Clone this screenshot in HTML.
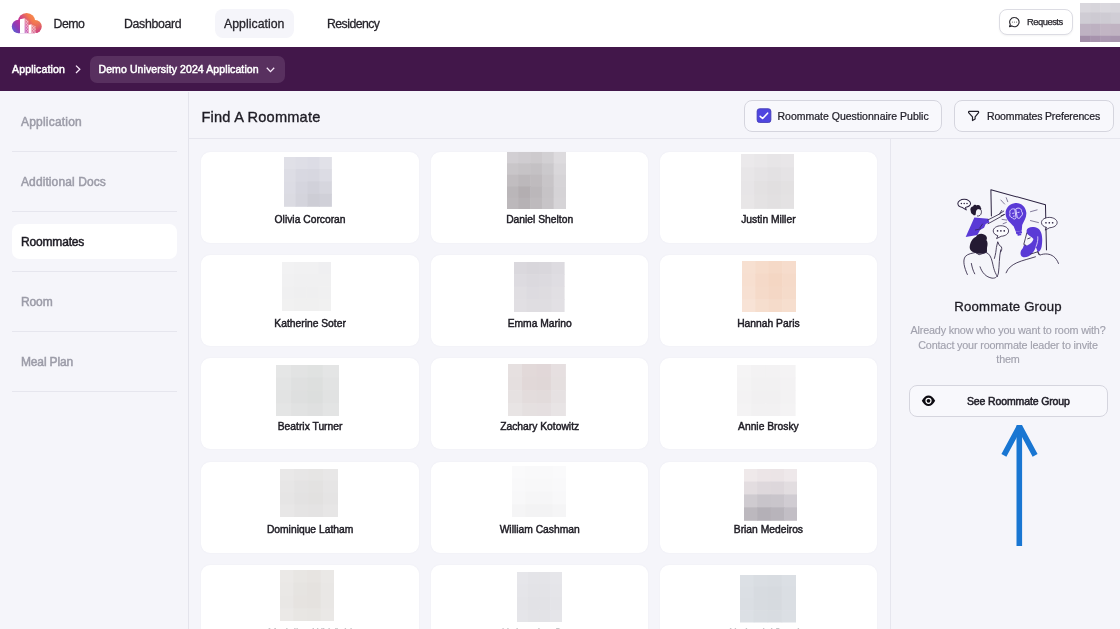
<!DOCTYPE html>
<html><head><meta charset="utf-8"><title>Find A Roommate</title>
<style>
*{box-sizing:border-box;margin:0;padding:0}
html,body{width:1120px;height:629px;overflow:hidden;background:#f5f5fa;font-family:"Liberation Sans",sans-serif;color:#1e1c24}
.abs{position:absolute}
.t{position:absolute;white-space:nowrap}
#top{position:absolute;left:0;top:0;width:1120px;height:47px;background:#fff}
.nav{-webkit-text-stroke:.28px;font-size:12.3px;line-height:16px;top:16px;color:#26242b}
#appl{position:absolute;left:215px;top:9px;width:79px;height:29px;border-radius:8px;background:#f5f5fa}
#req{position:absolute;left:998.5px;top:9px;width:74px;height:26px;border:1px solid #dcdce3;border-radius:8px;background:#fff;box-shadow:0 1px 2px rgba(0,0,0,.05)}
#bar{position:absolute;left:0;top:47px;width:1120px;height:44.2px;background:#42174a}
.bt{color:#fff;-webkit-text-stroke:.5px #fff;font-size:10.5px;line-height:14px;top:62px;letter-spacing:.1px}
#pill{position:absolute;left:89.5px;top:56.2px;width:195px;height:26.7px;border-radius:7px;background:#58305f}
#sideline{position:absolute;left:188px;top:91.5px;width:1px;height:538px;background:#e4e4ec}
.si{left:21px;font-size:12px;color:#9c9ca8;-webkit-text-stroke:.5px;line-height:16px;letter-spacing:.1px}
.sl{position:absolute;left:11.5px;width:165.5px;height:1px;background:#e6e6ee}
#sel{position:absolute;left:11.5px;top:224px;width:165.5px;height:35px;border-radius:8px;background:#fff}
#hline{position:absolute;left:189px;top:138px;width:931px;height:1px;background:#e6e6ee}
#h1{-webkit-text-stroke:.35px;left:201.5px;top:108px;line-height:18px;font-size:14.6px;color:#1e1c24;letter-spacing:.2px}
.btn{position:absolute;border:1px solid #d5d5de;border-radius:8px;background:#f8f8fc}
.btx{-webkit-text-stroke:.22px;font-size:10.5px;line-height:14px;color:#22202a}
#rline{position:absolute;left:889.5px;top:139px;width:1px;height:490px;background:#e6e6ee}
.card{position:absolute;width:217.6px;height:91px;border-radius:9px;background:#fff;box-shadow:0 0 2px rgba(80,80,120,.06)}
.nm{position:absolute;width:217.6px;text-align:center;font-size:10.3px;line-height:14px;color:#1e1c24;-webkit-text-stroke:.45px;letter-spacing:0;white-space:nowrap}
.para{-webkit-text-stroke:.15px;position:absolute;left:900px;width:216px;text-align:center;color:#a1a1ad;font-size:10.8px;line-height:14.8px;letter-spacing:-.17px;white-space:nowrap}
#wrap{position:absolute;left:0;top:0;width:1120px;height:629px;will-change:transform}
</style></head><body>
<div id="wrap">
<div id="top">
 <div id="appl"></div>
<svg class="abs" style="left:10px;top:10px" width="34" height="26" viewBox="10 10 34 26">
<defs><linearGradient id="lg" x1="13" y1="33" x2="38" y2="14" gradientUnits="userSpaceOnUse"><stop offset="0" stop-color="#4f6bd8"/><stop offset=".2" stop-color="#8a3db8"/><stop offset=".42" stop-color="#c2339a"/><stop offset=".72" stop-color="#f4794e"/><stop offset="1" stop-color="#f79a4a"/></linearGradient>
<linearGradient id="lg2" x1="31" y1="21" x2="40" y2="33" gradientUnits="userSpaceOnUse"><stop offset="0" stop-color="#f4794e" stop-opacity="0"/><stop offset="1" stop-color="#c2338e"/></linearGradient>
<pattern id="dots" width="1.5" height="1.5" patternUnits="userSpaceOnUse"><rect width=".7" height=".7" fill="#fff" fill-opacity=".9"/><rect x=".75" y=".75" width=".7" height=".7" fill="#fff" fill-opacity=".9"/></pattern></defs>
<g fill="url(#lg)"><circle cx="18.5" cy="26.5" r="6.7"/><circle cx="26.6" cy="21.7" r="8.8"/><circle cx="35" cy="26.5" r="6.6"/><rect x="18.5" y="24" width="16.5" height="9.2"/></g>
<g fill="url(#lg2)"><circle cx="35" cy="26.5" r="6.6"/><rect x="28" y="26" width="7" height="7.2"/></g>
<path d="M20 33.3V19.2l4.7-1v15.1z" fill="#fff"/>
<path d="M24.7 18.2l3.8 2.6v12.5h-3.8z" fill="url(#dots)"/>
<path d="M28.6 33.3V25l2.9-.8v9.1z" fill="#fff"/>
<path d="M31.5 24.2l4.2 2.4v6.7h-4.2z" fill="url(#dots)"/>
</svg>

 <div class="t nav" style="left:53.5px;letter-spacing:-.5px">Demo</div>
 <div class="t nav" style="left:124px;letter-spacing:-.32px">Dashboard</div>
 <div class="t nav" style="left:224px;letter-spacing:.03px">Application</div>
 <div class="t nav" style="left:327px;letter-spacing:-.55px">Residency</div>
 <div id="req"></div>
<svg class="abs" style="left:1006px;top:14px" width="16" height="16" viewBox="1006 14 16 16"><path d="M1014.5 17.5a4.6 4.6 0 1 1-2.6 8.4l-2.4.7.8-2.2a4.6 4.6 0 0 1 4.2-6.9z" fill="none" stroke="#26242b" stroke-width="1.1" stroke-linejoin="round"/><g fill="#777"><circle cx="1012.4" cy="22.1" r=".6"/><circle cx="1014.5" cy="22.1" r=".6"/><circle cx="1016.6" cy="22.1" r=".6"/></g></svg>

 <div class="t" style="left:1027px;top:16px;-webkit-text-stroke:.25px;font-size:9.4px;line-height:12px;color:#26242b;letter-spacing:-.5px">Requests</div>
<svg class="abs" style="left:1079.5px;top:2.5px;filter:blur(.5px)" width="41" height="39.5" viewBox="0 0 41 39.5"><rect x="-0.2" y="0" width="10.7" height="10.0" fill="#d9d7dd"/><rect x="10.1" y="0" width="10.7" height="10.0" fill="#d7d5db"/><rect x="20.3" y="0" width="10.7" height="10.0" fill="#dad8de"/><rect x="30.6" y="0" width="10.7" height="10.0" fill="#d8d6dc"/><rect x="-0.2" y="9.5" width="10.7" height="11.8" fill="#cfccd4"/><rect x="10.1" y="9.5" width="10.7" height="11.8" fill="#cdcad2"/><rect x="20.3" y="9.5" width="10.7" height="11.8" fill="#cecbd3"/><rect x="30.6" y="9.5" width="10.7" height="11.8" fill="#d0cdd5"/><rect x="-0.2" y="20.8" width="10.7" height="12.5" fill="#beb2c2"/><rect x="10.1" y="20.8" width="10.7" height="12.5" fill="#bdb1c1"/><rect x="20.3" y="20.8" width="10.7" height="12.5" fill="#c2b5c4"/><rect x="30.6" y="20.8" width="10.7" height="12.5" fill="#c0b3c2"/><rect x="-0.2" y="32.8" width="10.7" height="7.0" fill="#a28ea8"/><rect x="10.1" y="32.8" width="10.7" height="7.0" fill="#a793ad"/><rect x="20.3" y="32.8" width="10.7" height="7.0" fill="#ab98b1"/><rect x="30.6" y="32.8" width="10.7" height="7.0" fill="#a895ae"/></svg>

</div>
<div id="bar"></div>
<div id="pill"></div>
<div class="t bt" style="left:12px;letter-spacing:.15px">Application</div>
<div class="t bt" style="left:98.5px">Demo University 2024 Application</div>
<svg class="abs" style="left:70px;top:60px" width="210" height="20" viewBox="70 60 210 20"><g fill="none" stroke="#f8e8fb" stroke-width="1.3"><path d="M76 65.6 79.8 69.3 76 73"/><path d="M266.8 67.8 270.5 71.6 274.2 67.8"/></g></svg>

<div id="sideline"></div>
<div id="sel"></div>
<div class="t si" style="top:114px;letter-spacing:.2px">Application</div><div class="sl" style="top:151px"></div>
<div class="t si" style="top:174px">Additional Docs</div><div class="sl" style="top:211px"></div>
<div class="t si" style="top:234px;color:#1e1c24;letter-spacing:-.17px">Roommates</div><div class="sl" style="top:271px"></div>
<div class="t si" style="top:294px;letter-spacing:-.12px">Room</div><div class="sl" style="top:331px"></div>
<div class="t si" style="top:354px;letter-spacing:-.15px">Meal Plan</div><div class="sl" style="top:391px"></div>
<div id="hline"></div>
<div class="t" id="h1">Find A Roommate</div>
<div class="btn" style="left:743.5px;top:99.5px;width:198px;height:32.5px"></div>
<div class="btn" style="left:954px;top:99.5px;width:160px;height:32.5px"></div>
<svg class="abs" style="left:754px;top:105px" width="230" height="22" viewBox="754 105 230 22"><rect x="757.1" y="108.7" width="13.8" height="13.8" rx="2.6" fill="#4f46e0" stroke="#4039b4" stroke-width=".8"/><path d="M760.2 116.4 762.6 118.5 767.6 113.2" fill="none" stroke="#fff" stroke-width="1.6" stroke-linecap="round" stroke-linejoin="round"/>
<path d="M969.2 111.4h8.8q.6 0 .6.6v.7l-3.5 4.2v2l-2.6 1.6v-3.6l-3.9-4.2v-.7q0-.6.6-.6z" fill="none" stroke="#22202a" stroke-width="1.2" stroke-linejoin="round"/></svg>

<div class="t btx" style="left:777.5px;top:108.5px">Roommate Questionnaire Public</div>
<div class="t btx" style="left:987px;top:108.5px;letter-spacing:-.15px">Roommates Preferences</div>
<div class="card" style="left:201.3px;top:151.5px"></div>
<svg class="abs" style="left:284.4px;top:157.0px;filter:blur(.6px)" width="47.6" height="49.5" viewBox="0 0 47.60 49.50"><rect x="-0.30" y="-0.30" width="12.50" height="12.97" fill="#e0e0e7"/><rect x="11.60" y="-0.30" width="12.50" height="12.97" fill="#dedee6"/><rect x="23.50" y="-0.30" width="12.50" height="12.97" fill="#dcdce5"/><rect x="35.40" y="-0.30" width="12.50" height="12.97" fill="#e1e1e8"/><rect x="-0.30" y="12.07" width="12.50" height="12.97" fill="#dddde5"/><rect x="11.60" y="12.07" width="12.50" height="12.97" fill="#d8d8e1"/><rect x="23.50" y="12.07" width="12.50" height="12.97" fill="#d7d7e0"/><rect x="35.40" y="12.07" width="12.50" height="12.97" fill="#dcdce4"/><rect x="-0.30" y="24.45" width="12.50" height="12.97" fill="#dcdce4"/><rect x="11.60" y="24.45" width="12.50" height="12.97" fill="#d5d5de"/><rect x="23.50" y="24.45" width="12.50" height="12.97" fill="#d1d1da"/><rect x="35.40" y="24.45" width="12.50" height="12.97" fill="#d6d6de"/><rect x="-0.30" y="36.83" width="12.50" height="12.97" fill="#dbdbe2"/><rect x="11.60" y="36.83" width="12.50" height="12.97" fill="#d4d4dc"/><rect x="23.50" y="36.83" width="12.50" height="12.97" fill="#cdcdd5"/><rect x="35.40" y="36.83" width="12.50" height="12.97" fill="#d0d0d8"/></svg>
<div class="nm" style="left:201.3px;top:213.1px">Olivia Corcoran</div>
<div class="card" style="left:430.9px;top:151.5px"></div>
<svg class="abs" style="left:507.3px;top:151.7px;filter:blur(.6px)" width="58.7" height="57.5" viewBox="0 0 58.70 57.50"><rect x="-0.30" y="-0.30" width="12.34" height="12.10" fill="#d2cfd3"/><rect x="11.44" y="-0.30" width="12.34" height="12.10" fill="#cfccd0"/><rect x="23.18" y="-0.30" width="12.34" height="12.10" fill="#cdcacd"/><rect x="34.92" y="-0.30" width="12.34" height="12.10" fill="#d2d0d3"/><rect x="46.66" y="-0.30" width="12.34" height="12.10" fill="#dddbde"/><rect x="-0.30" y="11.20" width="12.34" height="12.10" fill="#c9c6c9"/><rect x="11.44" y="11.20" width="12.34" height="12.10" fill="#c6c3c6"/><rect x="23.18" y="11.20" width="12.34" height="12.10" fill="#c4c1c4"/><rect x="34.92" y="11.20" width="12.34" height="12.10" fill="#cbc9cc"/><rect x="46.66" y="11.20" width="12.34" height="12.10" fill="#d9d7da"/><rect x="-0.30" y="22.70" width="12.34" height="12.10" fill="#c1bdc0"/><rect x="11.44" y="22.70" width="12.34" height="12.10" fill="#bcb8bb"/><rect x="23.18" y="22.70" width="12.34" height="12.10" fill="#bfbbbe"/><rect x="34.92" y="22.70" width="12.34" height="12.10" fill="#c8c5c8"/><rect x="46.66" y="22.70" width="12.34" height="12.10" fill="#d6d4d7"/><rect x="-0.30" y="34.20" width="12.34" height="12.10" fill="#bab6b9"/><rect x="11.44" y="34.20" width="12.34" height="12.10" fill="#b3aeb1"/><rect x="23.18" y="34.20" width="12.34" height="12.10" fill="#bbb7ba"/><rect x="34.92" y="34.20" width="12.34" height="12.10" fill="#c6c3c6"/><rect x="46.66" y="34.20" width="12.34" height="12.10" fill="#d5d3d6"/><rect x="-0.30" y="45.70" width="12.34" height="12.10" fill="#bcb8bb"/><rect x="11.44" y="45.70" width="12.34" height="12.10" fill="#b6b2b5"/><rect x="23.18" y="45.70" width="12.34" height="12.10" fill="#bebabd"/><rect x="34.92" y="45.70" width="12.34" height="12.10" fill="#c7c4c7"/><rect x="46.66" y="45.70" width="12.34" height="12.10" fill="#d6d4d7"/></svg>
<div class="nm" style="left:430.9px;top:213.1px">Daniel Shelton</div>
<div class="card" style="left:659.6px;top:151.5px"></div>
<svg class="abs" style="left:740.6px;top:154.2px;filter:blur(.6px)" width="53.4" height="54.6" viewBox="0 0 53.40 54.60"><rect x="-0.30" y="-0.30" width="13.95" height="14.25" fill="#ebe9eb"/><rect x="13.05" y="-0.30" width="13.95" height="14.25" fill="#e9e7e9"/><rect x="26.40" y="-0.30" width="13.95" height="14.25" fill="#e7e5e7"/><rect x="39.75" y="-0.30" width="13.95" height="14.25" fill="#e8e6e8"/><rect x="-0.30" y="13.35" width="13.95" height="14.25" fill="#e8e6e8"/><rect x="13.05" y="13.35" width="13.95" height="14.25" fill="#e5e3e5"/><rect x="26.40" y="13.35" width="13.95" height="14.25" fill="#e3e1e3"/><rect x="39.75" y="13.35" width="13.95" height="14.25" fill="#e5e3e5"/><rect x="-0.30" y="27.00" width="13.95" height="14.25" fill="#e7e5e7"/><rect x="13.05" y="27.00" width="13.95" height="14.25" fill="#e3e1e2"/><rect x="26.40" y="27.00" width="13.95" height="14.25" fill="#e1dfe0"/><rect x="39.75" y="27.00" width="13.95" height="14.25" fill="#e3e1e2"/><rect x="-0.30" y="40.65" width="13.95" height="14.25" fill="#e8e6e7"/><rect x="13.05" y="40.65" width="13.95" height="14.25" fill="#e4e2e3"/><rect x="26.40" y="40.65" width="13.95" height="14.25" fill="#e2e0e1"/><rect x="39.75" y="40.65" width="13.95" height="14.25" fill="#e4e2e3"/></svg>
<div class="nm" style="left:659.6px;top:213.1px">Justin Miller</div>
<div class="card" style="left:201.3px;top:255px"></div>
<svg class="abs" style="left:282.3px;top:262.0px;filter:blur(.6px)" width="49.1" height="49.0" viewBox="0 0 49.10 49.00"><rect x="-0.30" y="-0.30" width="12.87" height="12.85" fill="#f2f2f3"/><rect x="11.97" y="-0.30" width="12.87" height="12.85" fill="#f1f1f2"/><rect x="24.25" y="-0.30" width="12.87" height="12.85" fill="#f1f1f2"/><rect x="36.52" y="-0.30" width="12.87" height="12.85" fill="#efeff1"/><rect x="-0.30" y="11.95" width="12.87" height="12.85" fill="#f1f1f2"/><rect x="11.97" y="11.95" width="12.87" height="12.85" fill="#f0f0f1"/><rect x="24.25" y="11.95" width="12.87" height="12.85" fill="#f0f0f1"/><rect x="36.52" y="11.95" width="12.87" height="12.85" fill="#f0f0f1"/><rect x="-0.30" y="24.20" width="12.87" height="12.85" fill="#f0f0f1"/><rect x="11.97" y="24.20" width="12.87" height="12.85" fill="#efeff0"/><rect x="24.25" y="24.20" width="12.87" height="12.85" fill="#efeff0"/><rect x="36.52" y="24.20" width="12.87" height="12.85" fill="#f0f0f1"/><rect x="-0.30" y="36.45" width="12.87" height="12.85" fill="#f1f1f1"/><rect x="11.97" y="36.45" width="12.87" height="12.85" fill="#f0f0f0"/><rect x="24.25" y="36.45" width="12.87" height="12.85" fill="#f0f0f0"/><rect x="36.52" y="36.45" width="12.87" height="12.85" fill="#f1f1f1"/></svg>
<div class="nm" style="left:201.3px;top:316.6px">Katherine Soter</div>
<div class="card" style="left:430.9px;top:255px"></div>
<svg class="abs" style="left:514.3px;top:262.0px;filter:blur(.6px)" width="50.3" height="49.7" viewBox="0 0 50.30 49.70"><rect x="-0.30" y="-0.30" width="13.18" height="13.02" fill="#dad8dd"/><rect x="12.28" y="-0.30" width="13.18" height="13.02" fill="#d8d6db"/><rect x="24.85" y="-0.30" width="13.18" height="13.02" fill="#d9d7dc"/><rect x="37.43" y="-0.30" width="13.18" height="13.02" fill="#dddbe0"/><rect x="-0.30" y="12.12" width="13.18" height="13.02" fill="#dddbe0"/><rect x="12.28" y="12.12" width="13.18" height="13.02" fill="#dbd9de"/><rect x="24.85" y="12.12" width="13.18" height="13.02" fill="#dcdadf"/><rect x="37.43" y="12.12" width="13.18" height="13.02" fill="#dfdde2"/><rect x="-0.30" y="24.55" width="13.18" height="13.02" fill="#e0dee2"/><rect x="12.28" y="24.55" width="13.18" height="13.02" fill="#dddbe0"/><rect x="24.85" y="24.55" width="13.18" height="13.02" fill="#dedce0"/><rect x="37.43" y="24.55" width="13.18" height="13.02" fill="#e1dfe3"/><rect x="-0.30" y="36.97" width="13.18" height="13.02" fill="#e1dfe3"/><rect x="12.28" y="36.97" width="13.18" height="13.02" fill="#dfdde1"/><rect x="24.85" y="36.97" width="13.18" height="13.02" fill="#dfdde1"/><rect x="37.43" y="36.97" width="13.18" height="13.02" fill="#e2e0e4"/></svg>
<div class="nm" style="left:430.9px;top:316.6px">Emma Marino</div>
<div class="card" style="left:659.6px;top:255px"></div>
<svg class="abs" style="left:741.7px;top:260.5px;filter:blur(.6px)" width="54.0" height="51.5" viewBox="0 0 54.00 51.50"><rect x="-0.30" y="-0.30" width="14.10" height="13.47" fill="#f7e0d1"/><rect x="13.20" y="-0.30" width="14.10" height="13.47" fill="#f6dccb"/><rect x="26.70" y="-0.30" width="14.10" height="13.47" fill="#f5d9c7"/><rect x="40.20" y="-0.30" width="14.10" height="13.47" fill="#f6dccc"/><rect x="-0.30" y="12.57" width="14.10" height="13.47" fill="#f7dfd0"/><rect x="13.20" y="12.57" width="14.10" height="13.47" fill="#f5d9c8"/><rect x="26.70" y="12.57" width="14.10" height="13.47" fill="#f4d6c3"/><rect x="40.20" y="12.57" width="14.10" height="13.47" fill="#f5dac9"/><rect x="-0.30" y="25.45" width="14.10" height="13.47" fill="#f7e0d2"/><rect x="13.20" y="25.45" width="14.10" height="13.47" fill="#f5dac9"/><rect x="26.70" y="25.45" width="14.10" height="13.47" fill="#f4d7c5"/><rect x="40.20" y="25.45" width="14.10" height="13.47" fill="#f5dbca"/><rect x="-0.30" y="38.33" width="14.10" height="13.47" fill="#f8e3d6"/><rect x="13.20" y="38.33" width="14.10" height="13.47" fill="#f6dece"/><rect x="26.70" y="38.33" width="14.10" height="13.47" fill="#f5dbca"/><rect x="40.20" y="38.33" width="14.10" height="13.47" fill="#f6dece"/></svg>
<div class="nm" style="left:659.6px;top:316.6px">Hannah Paris</div>
<div class="card" style="left:201.3px;top:358.2px"></div>
<svg class="abs" style="left:276.3px;top:364.8px;filter:blur(.6px)" width="62.7" height="51.5" viewBox="0 0 62.70 51.50"><rect x="-0.30" y="-0.30" width="16.27" height="13.47" fill="#e5e6e6"/><rect x="15.37" y="-0.30" width="16.27" height="13.47" fill="#e2e3e3"/><rect x="31.05" y="-0.30" width="16.27" height="13.47" fill="#e0e2e1"/><rect x="46.72" y="-0.30" width="16.27" height="13.47" fill="#e4e5e5"/><rect x="-0.30" y="12.57" width="16.27" height="13.47" fill="#e3e4e4"/><rect x="15.37" y="12.57" width="16.27" height="13.47" fill="#dfe0e0"/><rect x="31.05" y="12.57" width="16.27" height="13.47" fill="#dddfde"/><rect x="46.72" y="12.57" width="16.27" height="13.47" fill="#e2e3e3"/><rect x="-0.30" y="25.45" width="16.27" height="13.47" fill="#e2e3e3"/><rect x="15.37" y="25.45" width="16.27" height="13.47" fill="#dedfdf"/><rect x="31.05" y="25.45" width="16.27" height="13.47" fill="#dcdedd"/><rect x="46.72" y="25.45" width="16.27" height="13.47" fill="#e1e2e2"/><rect x="-0.30" y="38.33" width="16.27" height="13.47" fill="#e4e5e5"/><rect x="15.37" y="38.33" width="16.27" height="13.47" fill="#e1e2e2"/><rect x="31.05" y="38.33" width="16.27" height="13.47" fill="#dfe0e0"/><rect x="46.72" y="38.33" width="16.27" height="13.47" fill="#e3e4e4"/></svg>
<div class="nm" style="left:201.3px;top:419.8px">Beatrix Turner</div>
<div class="card" style="left:430.9px;top:358.2px"></div>
<svg class="abs" style="left:508.4px;top:363.6px;filter:blur(.6px)" width="57.6" height="52.7" viewBox="0 0 57.60 52.70"><rect x="-0.30" y="-0.30" width="15.00" height="13.77" fill="#e6e0e0"/><rect x="14.10" y="-0.30" width="15.00" height="13.77" fill="#e2d9d9"/><rect x="28.50" y="-0.30" width="15.00" height="13.77" fill="#e1d7d8"/><rect x="42.90" y="-0.30" width="15.00" height="13.77" fill="#e6dfe0"/><rect x="-0.30" y="12.87" width="15.00" height="13.77" fill="#e5dfdf"/><rect x="14.10" y="12.87" width="15.00" height="13.77" fill="#e1d8d8"/><rect x="28.50" y="12.87" width="15.00" height="13.77" fill="#e0d7d7"/><rect x="42.90" y="12.87" width="15.00" height="13.77" fill="#e5dfdf"/><rect x="-0.30" y="26.05" width="15.00" height="13.77" fill="#e6e1e1"/><rect x="14.10" y="26.05" width="15.00" height="13.77" fill="#e3dcdc"/><rect x="28.50" y="26.05" width="15.00" height="13.77" fill="#e2dbdb"/><rect x="42.90" y="26.05" width="15.00" height="13.77" fill="#e6e1e2"/><rect x="-0.30" y="39.22" width="15.00" height="13.77" fill="#e8e4e4"/><rect x="14.10" y="39.22" width="15.00" height="13.77" fill="#e5e0e0"/><rect x="28.50" y="39.22" width="15.00" height="13.77" fill="#e5dfe0"/><rect x="42.90" y="39.22" width="15.00" height="13.77" fill="#e8e4e5"/></svg>
<div class="nm" style="left:430.9px;top:419.8px">Zachary Kotowitz</div>
<div class="card" style="left:659.6px;top:358.2px"></div>
<svg class="abs" style="left:737.4px;top:364.8px;filter:blur(.6px)" width="58.3" height="51.5" viewBox="0 0 58.30 51.50"><rect x="-0.30" y="-0.30" width="15.18" height="13.47" fill="#f5f4f5"/><rect x="14.28" y="-0.30" width="15.18" height="13.47" fill="#f3f2f3"/><rect x="28.85" y="-0.30" width="15.18" height="13.47" fill="#f3f2f3"/><rect x="43.43" y="-0.30" width="15.18" height="13.47" fill="#f4f3f4"/><rect x="-0.30" y="12.57" width="15.18" height="13.47" fill="#f4f3f4"/><rect x="14.28" y="12.57" width="15.18" height="13.47" fill="#f2f1f2"/><rect x="28.85" y="12.57" width="15.18" height="13.47" fill="#f2f1f2"/><rect x="43.43" y="12.57" width="15.18" height="13.47" fill="#f3f2f3"/><rect x="-0.30" y="25.45" width="15.18" height="13.47" fill="#f3f2f3"/><rect x="14.28" y="25.45" width="15.18" height="13.47" fill="#f1f0f1"/><rect x="28.85" y="25.45" width="15.18" height="13.47" fill="#f1f0f1"/><rect x="43.43" y="25.45" width="15.18" height="13.47" fill="#f3f2f3"/><rect x="-0.30" y="38.33" width="15.18" height="13.47" fill="#f4f3f4"/><rect x="14.28" y="38.33" width="15.18" height="13.47" fill="#f2f1f2"/><rect x="28.85" y="38.33" width="15.18" height="13.47" fill="#f2f1f2"/><rect x="43.43" y="38.33" width="15.18" height="13.47" fill="#f4f3f4"/></svg>
<div class="nm" style="left:659.6px;top:419.8px">Annie Brosky</div>
<div class="card" style="left:201.3px;top:461.5px"></div>
<svg class="abs" style="left:280.0px;top:469.3px;filter:blur(.6px)" width="57.7" height="47.7" viewBox="0 0 57.70 47.70"><rect x="-0.30" y="-0.30" width="15.02" height="12.52" fill="#e9e8e8"/><rect x="14.12" y="-0.30" width="15.02" height="12.52" fill="#e7e6e6"/><rect x="28.55" y="-0.30" width="15.02" height="12.52" fill="#e6e5e4"/><rect x="42.97" y="-0.30" width="15.02" height="12.52" fill="#e8e7e7"/><rect x="-0.30" y="11.62" width="15.02" height="12.52" fill="#e7e6e6"/><rect x="14.12" y="11.62" width="15.02" height="12.52" fill="#e4e3e3"/><rect x="28.55" y="11.62" width="15.02" height="12.52" fill="#e3e2e1"/><rect x="42.97" y="11.62" width="15.02" height="12.52" fill="#e6e5e5"/><rect x="-0.30" y="23.55" width="15.02" height="12.52" fill="#e6e5e5"/><rect x="14.12" y="23.55" width="15.02" height="12.52" fill="#e3e2e2"/><rect x="28.55" y="23.55" width="15.02" height="12.52" fill="#e2e1e0"/><rect x="42.97" y="23.55" width="15.02" height="12.52" fill="#e5e4e4"/><rect x="-0.30" y="35.47" width="15.02" height="12.52" fill="#e8e7e7"/><rect x="14.12" y="35.47" width="15.02" height="12.52" fill="#e5e4e4"/><rect x="28.55" y="35.47" width="15.02" height="12.52" fill="#e4e3e3"/><rect x="42.97" y="35.47" width="15.02" height="12.52" fill="#e7e6e6"/></svg>
<div class="nm" style="left:201.3px;top:523.1px">Dominique Latham</div>
<div class="card" style="left:430.9px;top:461.5px"></div>
<svg class="abs" style="left:511.5px;top:465.5px;filter:blur(.6px)" width="54.5" height="51.5" viewBox="0 0 54.50 51.50"><rect x="-0.30" y="-0.30" width="14.22" height="13.47" fill="#fafafb"/><rect x="13.32" y="-0.30" width="14.22" height="13.47" fill="#f9f9fa"/><rect x="26.95" y="-0.30" width="14.22" height="13.47" fill="#f9f9fa"/><rect x="40.58" y="-0.30" width="14.22" height="13.47" fill="#fafafb"/><rect x="-0.30" y="12.57" width="14.22" height="13.47" fill="#f9f9fa"/><rect x="13.32" y="12.57" width="14.22" height="13.47" fill="#f8f8f9"/><rect x="26.95" y="12.57" width="14.22" height="13.47" fill="#f8f8f9"/><rect x="40.58" y="12.57" width="14.22" height="13.47" fill="#f9f9fa"/><rect x="-0.30" y="25.45" width="14.22" height="13.47" fill="#f8f8f9"/><rect x="13.32" y="25.45" width="14.22" height="13.47" fill="#f6f6f7"/><rect x="26.95" y="25.45" width="14.22" height="13.47" fill="#f6f6f7"/><rect x="40.58" y="25.45" width="14.22" height="13.47" fill="#f8f8f9"/><rect x="-0.30" y="38.33" width="14.22" height="13.47" fill="#f5f5f6"/><rect x="13.32" y="38.33" width="14.22" height="13.47" fill="#f3f3f4"/><rect x="26.95" y="38.33" width="14.22" height="13.47" fill="#f3f3f4"/><rect x="40.58" y="38.33" width="14.22" height="13.47" fill="#f5f5f6"/></svg>
<div class="nm" style="left:430.9px;top:523.1px">William Cashman</div>
<div class="card" style="left:659.6px;top:461.5px"></div>
<svg class="abs" style="left:743.6px;top:469.3px;filter:blur(.6px)" width="53.9" height="51.5" viewBox="0 0 53.90 51.50"><rect x="-0.30" y="-0.30" width="14.07" height="13.47" fill="#efe9ea"/><rect x="13.17" y="-0.30" width="14.07" height="13.47" fill="#ece5e7"/><rect x="26.65" y="-0.30" width="14.07" height="13.47" fill="#ebe4e6"/><rect x="40.12" y="-0.30" width="14.07" height="13.47" fill="#eee8ea"/><rect x="-0.30" y="12.57" width="14.07" height="13.47" fill="#e3dde0"/><rect x="13.17" y="12.57" width="14.07" height="13.47" fill="#ded8dc"/><rect x="26.65" y="12.57" width="14.07" height="13.47" fill="#ddd7db"/><rect x="40.12" y="12.57" width="14.07" height="13.47" fill="#e2dde0"/><rect x="-0.30" y="25.45" width="14.07" height="13.47" fill="#cfcbd0"/><rect x="13.17" y="25.45" width="14.07" height="13.47" fill="#c8c4ca"/><rect x="26.65" y="25.45" width="14.07" height="13.47" fill="#c9c5cb"/><rect x="40.12" y="25.45" width="14.07" height="13.47" fill="#d0ccd2"/><rect x="-0.30" y="38.32" width="14.07" height="13.47" fill="#bcb8be"/><rect x="13.17" y="38.32" width="14.07" height="13.47" fill="#b4b0b7"/><rect x="26.65" y="38.32" width="14.07" height="13.47" fill="#b8b4bb"/><rect x="40.12" y="38.32" width="14.07" height="13.47" fill="#c2bec5"/></svg>
<div class="nm" style="left:659.6px;top:523.1px">Brian Medeiros</div>
<div class="card" style="left:201.3px;top:564.9px"></div>
<svg class="abs" style="left:279.6px;top:569.8px;filter:blur(.6px)" width="54.6" height="51.5" viewBox="0 0 54.60 51.50"><rect x="-0.30" y="-0.30" width="14.25" height="13.47" fill="#ebe9e7"/><rect x="13.35" y="-0.30" width="14.25" height="13.47" fill="#e8e6e3"/><rect x="27.00" y="-0.30" width="14.25" height="13.47" fill="#e7e4e1"/><rect x="40.65" y="-0.30" width="14.25" height="13.47" fill="#eae8e6"/><rect x="-0.30" y="12.57" width="14.25" height="13.47" fill="#eae8e6"/><rect x="13.35" y="12.57" width="14.25" height="13.47" fill="#e6e4e1"/><rect x="27.00" y="12.57" width="14.25" height="13.47" fill="#e5e2df"/><rect x="40.65" y="12.57" width="14.25" height="13.47" fill="#e9e7e5"/><rect x="-0.30" y="25.45" width="14.25" height="13.47" fill="#e9e7e5"/><rect x="13.35" y="25.45" width="14.25" height="13.47" fill="#e6e3e0"/><rect x="27.00" y="25.45" width="14.25" height="13.47" fill="#e5e2df"/><rect x="40.65" y="25.45" width="14.25" height="13.47" fill="#e9e7e5"/><rect x="-0.30" y="38.33" width="14.25" height="13.47" fill="#ebe9e7"/><rect x="13.35" y="38.33" width="14.25" height="13.47" fill="#e8e6e3"/><rect x="27.00" y="38.33" width="14.25" height="13.47" fill="#e7e5e2"/><rect x="40.65" y="38.33" width="14.25" height="13.47" fill="#eae8e6"/></svg>
<div class="nm" style="left:201.3px;top:627.1px">Madeline Whitfield</div>
<div class="card" style="left:430.9px;top:564.9px"></div>
<svg class="abs" style="left:517.0px;top:571.7px;filter:blur(.6px)" width="44.7" height="50.8" viewBox="0 0 44.70 50.80"><rect x="-0.30" y="-0.30" width="11.78" height="13.30" fill="#e6e6ea"/><rect x="10.88" y="-0.30" width="11.78" height="13.30" fill="#e4e4e8"/><rect x="22.05" y="-0.30" width="11.78" height="13.30" fill="#e4e4e8"/><rect x="33.23" y="-0.30" width="11.78" height="13.30" fill="#e6e6ea"/><rect x="-0.30" y="12.40" width="11.78" height="13.30" fill="#e5e5e9"/><rect x="10.88" y="12.40" width="11.78" height="13.30" fill="#e3e3e7"/><rect x="22.05" y="12.40" width="11.78" height="13.30" fill="#e3e3e7"/><rect x="33.23" y="12.40" width="11.78" height="13.30" fill="#e5e5e9"/><rect x="-0.30" y="25.10" width="11.78" height="13.30" fill="#e4e4e8"/><rect x="10.88" y="25.10" width="11.78" height="13.30" fill="#e2e2e6"/><rect x="22.05" y="25.10" width="11.78" height="13.30" fill="#e2e2e6"/><rect x="33.23" y="25.10" width="11.78" height="13.30" fill="#e4e4e8"/><rect x="-0.30" y="37.80" width="11.78" height="13.30" fill="#e5e5e9"/><rect x="10.88" y="37.80" width="11.78" height="13.30" fill="#e3e3e7"/><rect x="22.05" y="37.80" width="11.78" height="13.30" fill="#e3e3e7"/><rect x="33.23" y="37.80" width="11.78" height="13.30" fill="#e5e5e9"/></svg>
<div class="nm" style="left:430.9px;top:627.1px">Christopher Dunn</div>
<div class="card" style="left:659.6px;top:564.9px"></div>
<svg class="abs" style="left:740.4px;top:575.4px;filter:blur(.6px)" width="55.9" height="47.2" viewBox="0 0 55.90 47.20"><rect x="-0.30" y="-0.30" width="14.57" height="12.40" fill="#dce0e5"/><rect x="13.67" y="-0.30" width="14.57" height="12.40" fill="#d9dde2"/><rect x="27.65" y="-0.30" width="14.57" height="12.40" fill="#d8dce1"/><rect x="41.62" y="-0.30" width="14.57" height="12.40" fill="#dbdfe4"/><rect x="-0.30" y="11.50" width="14.57" height="12.40" fill="#dbdfe4"/><rect x="13.67" y="11.50" width="14.57" height="12.40" fill="#d7dbe0"/><rect x="27.65" y="11.50" width="14.57" height="12.40" fill="#d6dadf"/><rect x="41.62" y="11.50" width="14.57" height="12.40" fill="#dadee3"/><rect x="-0.30" y="23.30" width="14.57" height="12.40" fill="#dadee3"/><rect x="13.67" y="23.30" width="14.57" height="12.40" fill="#d7dbe0"/><rect x="27.65" y="23.30" width="14.57" height="12.40" fill="#d6dadf"/><rect x="41.62" y="23.30" width="14.57" height="12.40" fill="#dadee3"/><rect x="-0.30" y="35.10" width="14.57" height="12.40" fill="#dce0e5"/><rect x="13.67" y="35.10" width="14.57" height="12.40" fill="#d9dde2"/><rect x="27.65" y="35.10" width="14.57" height="12.40" fill="#d8dce1"/><rect x="41.62" y="35.10" width="14.57" height="12.40" fill="#dbdfe4"/></svg>
<div class="nm" style="left:659.6px;top:627.1px">Nathaniel Brooks</div>
<div id="rline"></div>
<svg class="abs" style="left:950px;top:180px" width="120" height="105" viewBox="0 0 719 629">
<g fill="none" stroke="#2b2140" stroke-width="6" stroke-linecap="round" stroke-linejoin="round">
<path d="M248 215 245 58 572 148 578 420"/>
<path d="M305 120l22 24M337 106l9 24M482 190l40-11M482 243l48 12M312 236l28 4M318 262l20-8" stroke-width="4" stroke="#4a3f6b"/>
</g>
<g transform="rotate(-9 400 230)"><path d="M400 138c-38 0-64 30-62 66 2 30 22 48 36 70l8 34h36l8-34c14-22 34-40 36-70 2-36-24-66-62-66z" fill="#5a3ad6"/>
<rect x="382" y="308" width="36" height="16" rx="6" fill="#5a3ad6"/><rect x="388" y="324" width="24" height="10" rx="5" fill="#5a3ad6"/>
<g fill="none" stroke="#ddd4ff" stroke-width="5.5" stroke-linecap="round"><path d="M395 172c-18-8-34 6-30 22-8 10-2 26 10 28 4 12 16 12 20 6zM405 172c18-8 34 6 30 22 8 10 2 26-10 28-4 12-16 12-20 6z"/><path d="M380 196h8M412 196h8M382 214h6"/></g></g>
<g fill="#fbfbfe" stroke="#2b2140" stroke-width="5" stroke-linejoin="round">
<path stroke-width="6" d="M85 116c-21 0-38 11-38 25 0 12 12 21 28 24l22 14-4-15c17-3 30-11 30-23 0-14-17-25-38-25z"/>
<path d="M305 274c-25 0-46 14-46 31 0 13 11 24 28 29l-8 17 28-14c24-1 44-14 44-32 0-17-21-31-46-31z"/>
<path d="M595 224c-26 0-47 14-47 31 0 14 13 25 31 29l-9 16 27-14c25-1 45-14 45-31 0-17-21-31-47-31z"/>
</g>
<g fill="#2b2140"><circle cx="68" cy="141" r="4.5"/><circle cx="85" cy="141" r="4.5"/><circle cx="102" cy="141" r="4.5"/><circle cx="285" cy="305" r="5"/><circle cx="305" cy="305" r="5"/><circle cx="325" cy="305" r="5"/><circle cx="575" cy="256" r="5"/><circle cx="595" cy="256" r="5"/><circle cx="615" cy="256" r="5"/></g>
<!-- person 1 -->
<path d="M146 224l84 8 6 22-22 10-10 22-24 14-16 30-70 12z" fill="#5a3ad6"/><path d="M150 300l36-8M196 262l-18 26" stroke="#2b2140" stroke-width="4" fill="none"/>
<g fill="none" stroke="#2b2140" stroke-width="5" stroke-linecap="round"><path d="M226 240l70-36 26-18M228 262l76-42 18-12M296 204l14-22M306 214l22-8"/><path d="M168 172c14-4 22 8 20 24-2 14-12 22-24 20"/></g>
<path d="M124 184c-6-14 4-26 14-26 2-10 16-12 22-6 10-6 24 0 24 12 6 4 4 14-2 14-8-6-18-4-22 2-6 8-4 18-6 26-4 8-14 6-16 0-10-2-14-12-14-22z" fill="#241a33"/>
<!-- person 2 -->
<path d="M118 408c0-30 14-58 38-68 6-16 30-22 48-14 16 6 22 22 14 34 10 14 8 30 4 44-2 12 2 22-2 30-22 12-58 10-76 0-14-4-24-12-26-26z" fill="#241a33"/>
<g fill="none" stroke="#2b2140" stroke-width="5" stroke-linecap="round" stroke-linejoin="round"><path d="M104 566c-18-40-30-84-12-108 14-16 44-20 62-24l20 14 42-14c22 8 30 30 36 52 8 30 10 60 32 92"/><path d="M180 520c12 36 36 62 72 68 22 2 34-10 38-30 6-40 4-100 14-140"/><path d="M266 470c8-26 10-48 12-66l8-34 10 22 12 8c4 12 2 22-4 30"/><path d="M128 500c4 22 10 44 20 62"/></g>
<!-- person 3 -->
<path d="M459 302C462 280 500 274 528 290C550 305 558 345 549 400C545 418 538 428 526 432L514 402C507 422 496 442 471 457C451 467 431 465 425 451C419 437 424 421 436 409C440 399 441 393 444 389L462 393C481 385 497 371 500 354C491 341 470 333 459 319z" fill="#5a3ad6"/>
<path d="M516 398c8-20 12-40 10-58" stroke="#e9dcff" stroke-width="5" fill="none" stroke-linecap="round"/>
<g fill="none" stroke="#2b2140" stroke-width="5" stroke-linecap="round" stroke-linejoin="round"><path d="M460 318c-6 22-12 46-18 68l12 5"/><path d="M466 352l14-5"/><path d="M336 556c10-28 34-46 64-60 36-16 76-24 112-36"/><path d="M482 444l44-14 12 20c30-12 62-8 82 8 14 10 24 26 30 42"/><path d="M526 430l6 16"/></g>
</svg>

<div class="t" style="left:900px;width:216px;text-align:center;top:298px;font-size:13.2px;line-height:18px;color:#1e1c24;letter-spacing:.2px;-webkit-text-stroke:.3px">Roommate Group</div>
<div class="para" style="top:322.5px">Already know who you want to room with?</div>
<div class="para" style="top:337.5px">Contact your roommate leader to invite</div>
<div class="para" style="top:352px">them</div>
<div class="btn" style="left:908.5px;top:385px;width:199.5px;height:31.5px"></div>
<svg class="abs" style="left:920px;top:394px" width="18" height="14" viewBox="920 394 18 14"><path d="M921.8 400.8q3-5.2 6.7-5.2t6.7 5.2q-3 5.2-6.7 5.2t-6.7-5.2z" fill="#0d0b12"/><circle cx="928.5" cy="400.8" r="3.1" fill="#fff"/><circle cx="928.5" cy="400.8" r="1.9" fill="#0d0b12"/></svg>

<div class="t btx" style="left:967px;top:394px;-webkit-text-stroke:.5px;letter-spacing:-.13px">See Roommate Group</div>
<svg class="abs" style="left:990px;top:415px" width="60" height="140" viewBox="990 415 60 140"><g fill="none" stroke="#1976d2" stroke-width="5.6"><path d="M1019.3 546V425.3"/><path d="M1003.9 455.3 1019.5 426.4 1035.1 455.3" stroke-linejoin="bevel"/></g></svg>

</div>
</body></html>
